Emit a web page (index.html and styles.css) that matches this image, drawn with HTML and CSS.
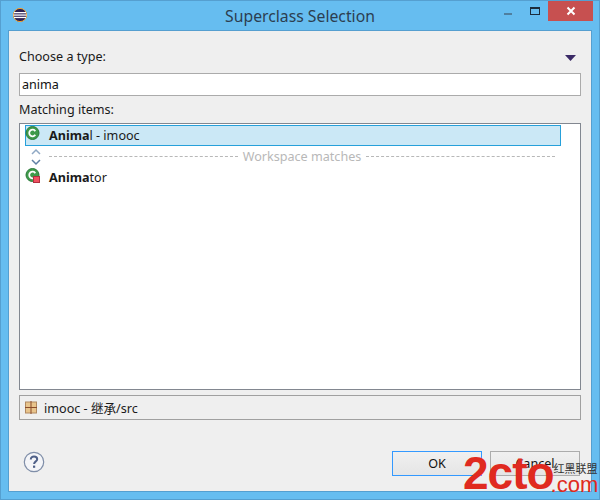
FILE: index.html
```html
<!DOCTYPE html>
<html lang="en">
<head>
<meta charset="utf-8">
<title>Superclass Selection</title>
<link rel="stylesheet" href="styles.css">
</head>
<body>
<div class="window">
  <header class="titlebar">
    <svg class="app-icon" width="16" height="16" viewBox="0 0 16 16">
      <circle cx="8" cy="8" r="6.6" fill="#2c2255" stroke="#f0a030" stroke-width="1"/>
      <rect x="2" y="5" width="12" height="1.3" fill="#fff"/>
      <rect x="1.5" y="7.4" width="13" height="1.3" fill="#fff"/>
      <rect x="2" y="9.8" width="12" height="1.3" fill="#fff"/>
    </svg>
    <div class="title">Superclass Selection</div>
    <div class="controls">
      <div class="ctl"><span class="min"></span></div>
      <div class="ctl"><span class="max"></span></div>
      <div class="close">
        <svg width="10" height="10" viewBox="0 0 10 10"><path d="M1.5 1.5L8.5 8.5M8.5 1.5L1.5 8.5" stroke="#fff" stroke-width="2"/></svg>
      </div>
    </div>
  </header>
  <main class="content">
    <div class="label-row">
      <span>Choose a type:</span>
      <svg class="menu-arrow" width="11" height="6" viewBox="0 0 11 6"><path d="M0 0H11L5.5 6Z" fill="#3a2a66"/></svg>
    </div>
    <div class="input">anima</div>
    <div class="label-items">Matching items:</div>
    <div class="list">
      <div class="row selected">
        <svg class="class-icon" width="16" height="16" viewBox="0 0 16 16">
          <circle cx="7.5" cy="7" r="6.5" fill="#3f9a4a" stroke="#2a7a3a"/>
          <path d="M10.3 5.2A3.3 3.3 0 1 0 10.3 8.8" fill="none" stroke="#fff" stroke-width="1.8"/>
        </svg>
        <span class="name"><b>Anima</b>l - imooc</span>
      </div>
      <div class="sep-row">
        <svg class="chevrons" width="12" height="18" viewBox="0 0 12 18">
          <path d="M2 6L6 2L10 6" fill="none" stroke="#8fa8c4" stroke-width="1.5"/>
          <path d="M2 12L6 16L10 12" fill="none" stroke="#5f7fa4" stroke-width="1.5"/>
        </svg>
        <span class="dash"></span>
        <span class="sep-text">Workspace matches</span>
        <span class="dash"></span>
      </div>
      <div class="row plain">
        <svg class="class-icon" width="16" height="16" viewBox="0 0 16 16">
          <circle cx="7.5" cy="7" r="6.5" fill="#3f9a4a" stroke="#2a7a3a"/>
          <path d="M10.3 5.2A3.3 3.3 0 1 0 10.3 8.8" fill="none" stroke="#fff" stroke-width="1.8"/>
          <rect x="8.5" y="8.5" width="6" height="6" fill="#f05060" stroke="#b03040"/>
        </svg>
        <span class="name"><b>Anima</b>tor</span>
      </div>
    </div>
    <div class="status">
      <svg class="pkg-icon" width="12" height="13" viewBox="0 0 12 13">
        <rect x="0.5" y="1" width="11" height="11" fill="#e8c48c" stroke="#b08860"/>
        <path d="M6 0V13M0 6.5H12" stroke="#8a4a2a" stroke-width="1"/>
      </svg>
      <span>imooc - 继承/src</span>
    </div>
    <footer class="footer">
      <svg class="help" width="22" height="22" viewBox="0 0 22 22">
        <circle cx="11" cy="11" r="9.7" fill="#f4f5f8" stroke="#7f8ea8" stroke-width="1.2"/>
        <path d="M7.8 8.4C7.8 6.6 9.2 5.6 11 5.6C12.9 5.6 14.2 6.7 14.2 8.2C14.2 10.4 11.1 10.4 11.1 13" fill="none" stroke="#4f6088" stroke-width="2"/>
        <rect x="10" y="14.6" width="2.2" height="2.2" fill="#4f6088"/>
      </svg>
      <div class="buttons">
        <button class="btn default">OK</button>
        <button class="btn">Cancel</button>
      </div>
    </footer>
  </main>
  <div class="watermark">
    <span class="wm-logo">2cto</span>
    <div class="wm-side">
      <span class="wm-cn">红黑联盟</span>
      <span class="wm-com">.com</span>
    </div>
  </div>
</div>
</body>
</html>
```

FILE: styles.css
```css
* { box-sizing: border-box; }
html, body { margin: 0; padding: 0; }
body {
  font-family: "Noto Sans", "Noto Sans CJK SC", sans-serif;
  font-size: 12.6px;
  color: #1a1a1a;
  width: 600px;
  height: 500px;
  overflow: hidden;
}
.window {
  position: relative;
  width: 600px;
  height: 500px;
  background: #66bdf0;
  border: 1px solid #559fd0;
  display: flex;
  flex-direction: column;
}
.titlebar {
  position: relative;
  height: 29px;
  flex: none;
  display: flex;
  align-items: center;
  justify-content: center;
}
.app-icon { position: absolute; left: 11px; top: 6px; }
.title {
  font-size: 15.75px;
  color: #2c3e50;
}
.controls {
  position: absolute;
  right: 6px;
  top: 0;
  display: flex;
  height: 20px;
}
.ctl { width: 29px; display: flex; align-items: center; justify-content: center; }
.min { width: 8px; height: 2px; background: #4f7f9f; margin-top: 5px; margin-left: 7px; }
.max { width: 10px; height: 8px; border: 1px solid #1c2c3c; border-top-width: 2px; margin-left: 3px; }
.close {
  width: 45px;
  background: #c75050;
  display: flex;
  align-items: center;
  justify-content: center;
}
.content {
  flex: 1;
  margin: 0 7px 7px;
  background: #efefef;
  border: 1px solid #559fd0;
  padding: 0 10px;
  display: flex;
  flex-direction: column;
}
.label-row {
  height: 42px;
  padding: 17px 5px 0 0;
  display: flex;
  justify-content: space-between;
  line-height: 18px;
}
.menu-arrow { margin-top: 7px; }
.input {
  height: 23px;
  background: #fff;
  border: 1px solid #ababab;
  padding-left: 2px;
  line-height: 21px;
  color: #111;
}
.label-items { height: 27px; padding-top: 5px; line-height: 18px; }
.list {
  height: 267px;
  flex: none;
  background: #fff;
  border: 1px solid #828790;
  padding: 1px 19px 0 5px;
}
.row {
  height: 21px;
  display: flex;
  align-items: center;
}
.selected {
  background: #cbe8f6;
  border: 1px solid #26a0da;
}
.class-icon { flex: none; margin-left: -1px; margin-right: 8px; margin-top: -3px; }
.plain { padding-left: 1px; }
.name b { font-weight: 700; }
.sep-row {
  height: 21px;
  display: flex;
  align-items: center;
  gap: 5px;
  color: #b8b8b8;
  padding-right: 6px;
}
.chevrons { flex: none; margin: 0 2px 0 5px; }
.dash { flex: 1; border-top: 1px dashed #b8b8b8; }
.sep-text { line-height: 14px; }
.status {
  height: 25px;
  margin-top: 5px;
  border: 1px solid #a0a0a0;
  padding-left: 5px;
  display: flex;
  align-items: center;
  gap: 7px;
}
.footer {
  flex: 1;
  display: flex;
  justify-content: space-between;
  padding: 31px 0 0 4px;
}
.buttons { display: flex; gap: 8px; height: 25px; margin-right: 1px; }
.btn {
  width: 90px;
  height: 25px;
  font: inherit;
  color: #111;
  background: linear-gradient(#f0f0f0, #e5e5e5);
  border: 1px solid #acacac;
  padding: 0;
}
.default { border-color: #3399ff; }
.watermark {
  position: absolute;
  left: 462px;
  top: 450px;
  display: flex;
  color: #e02a20;
}
.wm-logo {
  font-family: "Liberation Sans", sans-serif;
  font-size: 46px;
  font-weight: 700;
  line-height: 44px;
  letter-spacing: -1px;
}
.wm-side { display: flex; flex-direction: column; margin-left: -1px; }
.wm-cn { color: #333; font-size: 11px; line-height: 14px; margin: 11px 0 0 1px; white-space: nowrap; }
.wm-com { font-family: "Liberation Sans", sans-serif; font-size: 22px; line-height: 20px; margin: -1px 0 0 -2px; white-space: nowrap; }
```
